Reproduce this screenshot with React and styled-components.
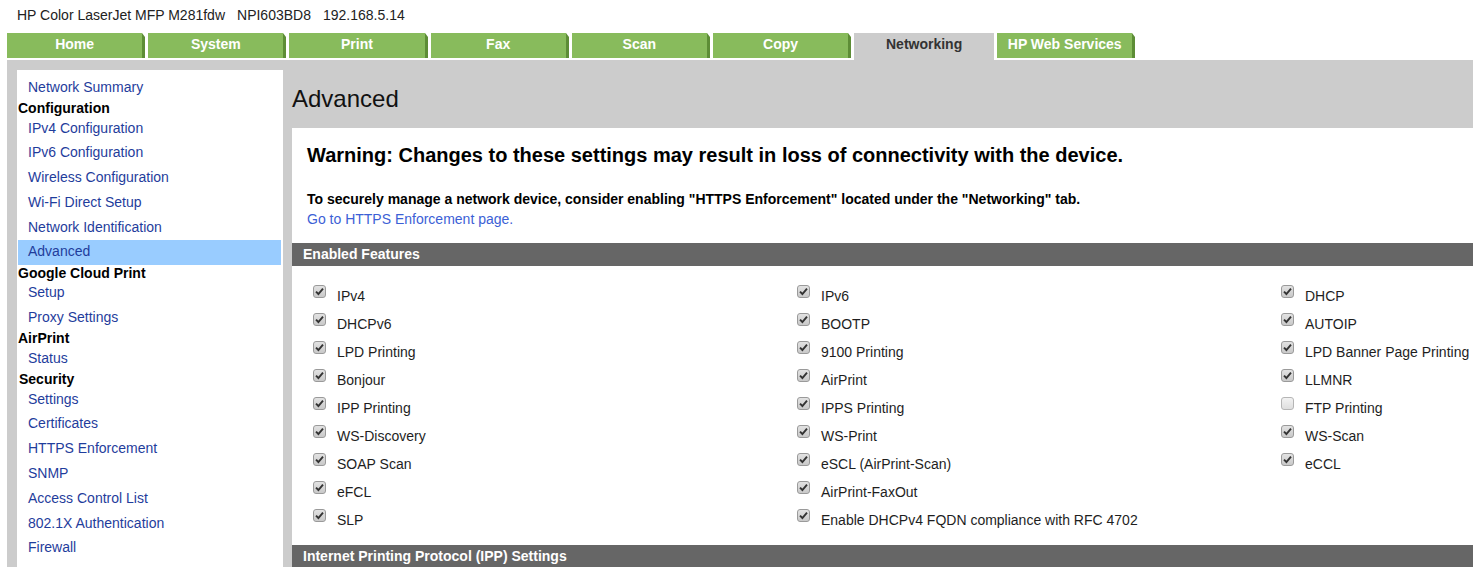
import React from "react";
import styled, { createGlobalStyle } from "styled-components";

const GlobalStyle = createGlobalStyle`
	html, body {
		margin: 0;
		padding: 0;
		overflow: hidden;
		background: #fff;
		font-family: Arial, "Liberation Sans", sans-serif;
	}
`;

const Page = styled.div`
	padding: 0 0 0 7px;
	min-height: 567px;
	display: flex;
	flex-direction: column;
`;

const Header = styled.div`
	height: 33px;
	display: flex;
	align-items: center;
	padding-left: 10px;
	padding-bottom: 3px;
	box-sizing: border-box;
	font-size: 14px;
	color: #222;
`;

const HeaderPart = styled.span`
	& + & {
		margin-left: 12px;
	}
`;

const TabBar = styled.div`
	display: flex;
	align-items: flex-start;
	gap: 3px;
	height: 27px;
`;

const Tab = styled.div`
	position: relative;
	box-sizing: border-box;
	width: ${(p) => (p.$active ? "140px" : "138.2px")};
	height: ${(p) => (p.$active ? "27px" : "25px")};
	display: flex;
	align-items: center;
	justify-content: center;
	padding-bottom: ${(p) => (p.$active ? "5px" : "3px")};
	font-size: 14px;
	font-weight: 700;
	color: ${(p) => (p.$active ? "#333" : "#fff")};
	background: ${(p) => (p.$active ? "#cccccc" : "#88bb5c")};
	border-right: ${(p) => (p.$active ? "none" : "3px solid #5d8d36")};

	&::after {
		content: "";
		display: ${(p) => (p.$active ? "none" : "block")};
		position: absolute;
		top: 0;
		right: -3px;
		width: 0;
		height: 0;
		border-top: 4px solid #fff;
		border-left: 3px solid transparent;
	}
`;

const Body = styled.div`
	flex: 1;
	background: #cccccc;
	display: flex;
	align-items: flex-start;
	padding: 10px 0 0 10px;
	gap: 9px;
`;

const Sidebar = styled.nav`
	width: 266px;
	flex-shrink: 0;
	background: #fff;
	box-sizing: border-box;
	padding: 5.4px 2px 20px 0;
	display: flex;
	flex-direction: column;
	align-items: stretch;
`;

const NavHeading = styled.div`
	font-size: 14px;
	font-weight: 700;
	line-height: 16px;
	color: #000;
	padding-left: ${(p) => p.$indent || 1}px;
`;

const NavLink = styled.a`
	display: block;
	font-size: 14px;
	line-height: 16px;
	padding: 3.4px 0 5.4px 10px;
	color: #1f3d9c;
	text-decoration: none;
	background: ${(p) => (p.$selected ? "#99ccff" : "transparent")};
	margin-left: 1px;
	cursor: pointer;
`;

const Main = styled.main`
	flex: 1;
	min-width: 0;
	display: flex;
	flex-direction: column;
`;

const Title = styled.h1`
	margin: 15px 0 15px 0;
	font-size: 24px;
	line-height: 28px;
	font-weight: 400;
	color: #111;
`;

const Panel = styled.section`
	background: #fff;
	padding-top: 15px;
	padding-bottom: 40px;
`;

const Warning = styled.h2`
	margin: 0 0 22px 15px;
	font-size: 20px;
	line-height: 24px;
	font-weight: 700;
	color: #000;
`;

const Notice = styled.p`
	margin: 0 0 14px 15px;
	font-size: 14px;
	line-height: 20px;
	font-weight: 700;
	color: #000;
`;

const NoticeLink = styled.a`
	display: block;
	font-weight: 400;
	color: #3c5fd6;
	text-decoration: none;
`;

const SectionBar = styled.div`
	height: 23px;
	background: #666666;
	color: #fff;
	font-size: 14px;
	font-weight: 700;
	display: flex;
	align-items: center;
	padding-left: 11px;
	padding-bottom: 1px;
	box-sizing: border-box;
`;

const FeatureGrid = styled.div`
	display: grid;
	grid-template-columns: 484px 484px 484px;
	grid-auto-rows: 28px;
	padding: 16px 0 11px 21px;
`;

const Feature = styled.label`
	display: flex;
	align-items: flex-start;
	gap: 11px;
	white-space: nowrap;
`;

const Box = styled.span`
	box-sizing: border-box;
	width: 13px;
	height: 13px;
	margin-top: 3px;
	flex-shrink: 0;
	border: 1px solid ${(p) => (p.$checked ? "#9a9a9a" : "#b5b5b5")};
	border-radius: 3px;
	background: ${(p) =>
		p.$checked
			? "linear-gradient(#e2e2e2, #c9c9c9)"
			: "linear-gradient(#f2f2f2, #dedede)"};
	display: flex;
	align-items: center;
	justify-content: center;
`;

const FeatureText = styled.span`
	font-size: 14px;
	line-height: 28px;
	color: #1e1e1e;
`;

const Check = () => (
	<svg width="9" height="9" viewBox="0 0 9 9">
		<path d="M1 4.6 L3.4 7 L8 1.6" fill="none" stroke="#333" strokeWidth="1.9" />
	</svg>
);

const tabs = ["Home", "System", "Print", "Fax", "Scan", "Copy", "Networking", "HP Web Services"];

const nav = [
	{ link: "Network Summary" },
	{ heading: "Configuration" },
	{ link: "IPv4 Configuration" },
	{ link: "IPv6 Configuration" },
	{ link: "Wireless Configuration" },
	{ link: "Wi-Fi Direct Setup" },
	{ link: "Network Identification" },
	{ link: "Advanced", selected: true },
	{ heading: "Google Cloud Print" },
	{ link: "Setup" },
	{ link: "Proxy Settings" },
	{ heading: "AirPrint" },
	{ link: "Status" },
	{ heading: "Security", indent: 2 },
	{ link: "Settings" },
	{ link: "Certificates" },
	{ link: "HTTPS Enforcement" },
	{ link: "SNMP" },
	{ link: "Access Control List" },
	{ link: "802.1X Authentication" },
	{ link: "Firewall" },
];

const features = [
	[["IPv4", true], ["IPv6", true], ["DHCP", true]],
	[["DHCPv6", true], ["BOOTP", true], ["AUTOIP", true]],
	[["LPD Printing", true], ["9100 Printing", true], ["LPD Banner Page Printing", true]],
	[["Bonjour", true], ["AirPrint", true], ["LLMNR", true]],
	[["IPP Printing", true], ["IPPS Printing", true], ["FTP Printing", false]],
	[["WS-Discovery", true], ["WS-Print", true], ["WS-Scan", true]],
	[["SOAP Scan", true], ["eSCL (AirPrint-Scan)", true], ["eCCL", true]],
	[["eFCL", true], ["AirPrint-FaxOut", true], null],
	[["SLP", true], ["Enable DHCPv4 FQDN compliance with RFC 4702", true], null],
];

const App = () => {
	return (
		<>
			<GlobalStyle />
			<Page>
				<Header>
					<HeaderPart>HP Color LaserJet MFP M281fdw</HeaderPart>
					<HeaderPart>NPI603BD8</HeaderPart>
					<HeaderPart>192.168.5.14</HeaderPart>
				</Header>
				<TabBar>
					{tabs.map((t) => (
						<Tab key={t} $active={t === "Networking"}>
							{t}
						</Tab>
					))}
				</TabBar>
				<Body>
					<Sidebar>
						{nav.map((item, i) =>
							item.heading ? (
								<NavHeading key={i} $indent={item.indent}>
									{item.heading}
								</NavHeading>
							) : (
								<NavLink key={i} $selected={item.selected}>
									{item.link}
								</NavLink>
							)
						)}
					</Sidebar>
					<Main>
						<Title>Advanced</Title>
						<Panel>
							<Warning>
								Warning: Changes to these settings may result in loss of connectivity with the device.
							</Warning>
							<Notice>
								To securely manage a network device, consider enabling "HTTPS Enforcement" located under the "Networking" tab.
								<NoticeLink>Go to HTTPS Enforcement page.</NoticeLink>
							</Notice>
							<SectionBar>Enabled Features</SectionBar>
							<FeatureGrid>
								{features.flat().map((f, i) =>
									f ? (
										<Feature key={i}>
											<Box $checked={f[1]}>{f[1] && <Check />}</Box>
											<FeatureText>{f[0]}</FeatureText>
										</Feature>
									) : (
										<span key={i} />
									)
								)}
							</FeatureGrid>
							<SectionBar>Internet Printing Protocol (IPP) Settings</SectionBar>
						</Panel>
					</Main>
				</Body>
			</Page>
		</>
	);
};

export default App;
